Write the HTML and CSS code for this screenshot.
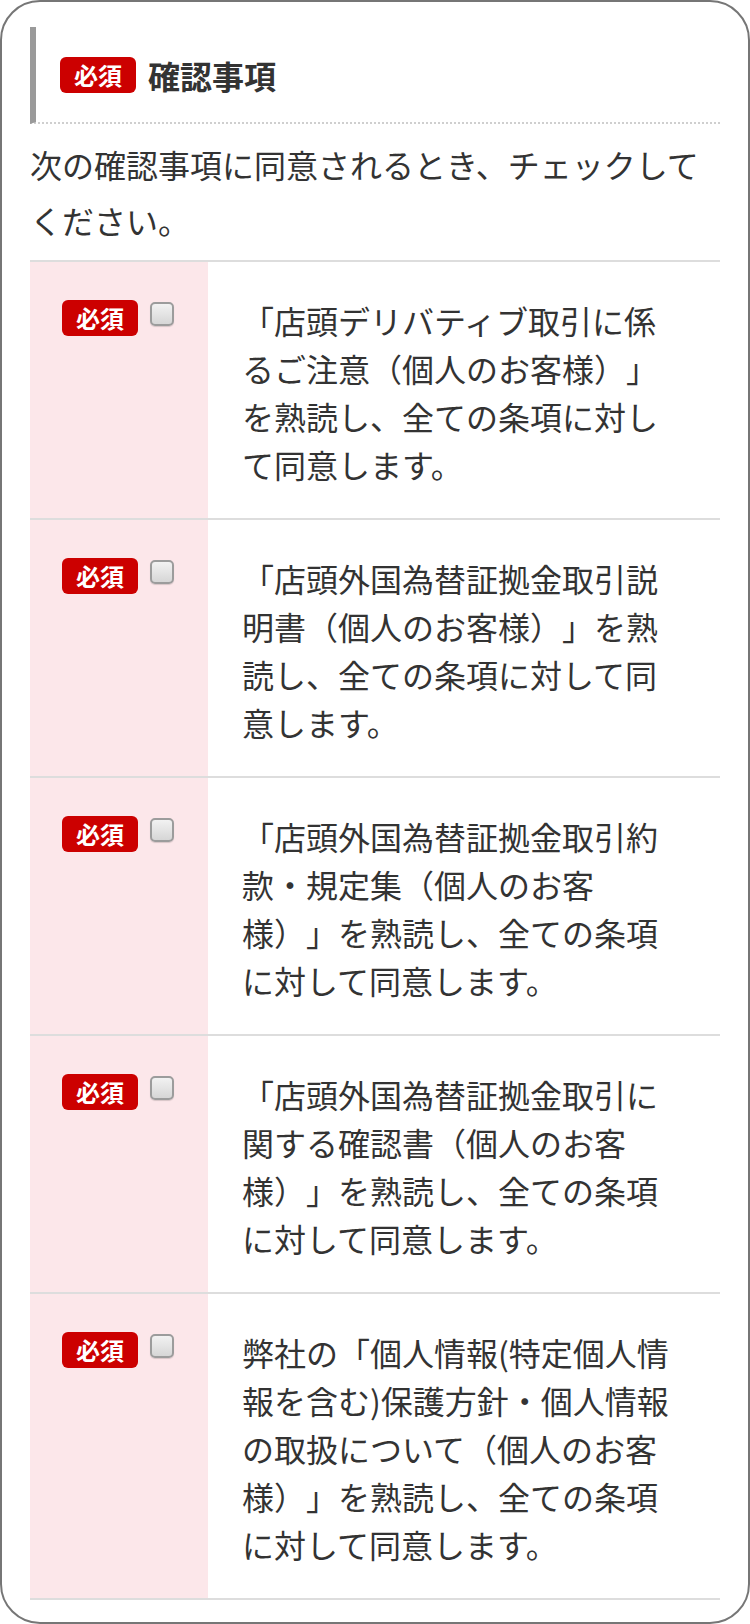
FILE: index.html
```html
<!DOCTYPE html>
<html lang="ja">
<head>
<meta charset="utf-8">
<title>確認事項</title>
<link rel="stylesheet" href="styles.css">
</head>
<body>
<div class="card">
  <div class="heading">
    <span class="badge">必須</span>
    <span class="heading-text">確認事項</span>
  </div>
  <p class="intro">次の確認事項に同意されるとき、チェックしてください。</p>
  <div class="table">
    <div class="row">
      <div class="head"><span class="badge">必須</span><input type="checkbox" class="check"></div>
      <div class="body">「店頭デリバティブ取引に係るご注意（個人のお客様）」を熟読し、全ての条項に対して同意します。</div>
    </div>
    <div class="row">
      <div class="head"><span class="badge">必須</span><input type="checkbox" class="check"></div>
      <div class="body">「店頭外国為替証拠金取引説明書（個人のお客様）」を熟読し、全ての条項に対して同意します。</div>
    </div>
    <div class="row">
      <div class="head"><span class="badge">必須</span><input type="checkbox" class="check"></div>
      <div class="body">「店頭外国為替証拠金取引約款・規定集（個人のお客様）」を熟読し、全ての条項に対して同意します。</div>
    </div>
    <div class="row">
      <div class="head"><span class="badge">必須</span><input type="checkbox" class="check"></div>
      <div class="body">「店頭外国為替証拠金取引に関する確認書（個人のお客様）」を熟読し、全ての条項に対して同意します。</div>
    </div>
    <div class="row">
      <div class="head"><span class="badge">必須</span><input type="checkbox" class="check"></div>
      <div class="body">弊社の「個人情報(特定個人情報を含む)保護方針・個人情報の取扱について（個人のお客様）」を熟読し、全ての条項に対して同意します。</div>
    </div>
  </div>
</div>
</body>
</html>
```
FILE: styles.css
```css
html, body {
  margin: 0;
  padding: 0;
  background: #ffffff;
}
body {
  font-family: "Noto Sans CJK JP", "Noto Sans", sans-serif;
  color: #333333;
  text-spacing-trim: space-all;
  font-feature-settings: "palt" 0, "halt" 0, "chws" 0;
}
.card {
  box-sizing: border-box;
  width: 750px;
  min-height: 1624px;
  border: 2px solid #767676;
  border-radius: 40px;
  padding: 25px 28px 22px 28px;
  background: #ffffff;
}
.heading {
  display: flex;
  align-items: center;
  gap: 12px;
  border-left: 6px solid #9a9a9a;
  border-bottom: 2px dotted #cfcfcf;
  padding: 24px 0 23px 24px;
  line-height: 48px;
}
.heading-text {
  font-size: 32px;
  font-weight: bold;
  color: #333333;
}
.badge {
  display: inline-flex;
  align-items: center;
  justify-content: center;
  width: 76px;
  height: 36px;
  flex: none;
  background: #cc0000;
  color: #ffffff;
  border-radius: 6px;
  font-size: 24px;
  font-weight: bold;
  line-height: 1;
}
.intro {
  margin: 12px 0 12px 0;
  font-size: 32px;
  line-height: 56px;
  color: #333333;
}
.table {
  border-top: 2px solid #dddddd;
}
.row {
  display: grid;
  grid-template-columns: 178px 1fr;
  border-bottom: 2px solid #dddddd;
}
.head {
  background: #fce7ea;
  display: flex;
  align-items: flex-start;
  gap: 12px;
  padding: 38px 0 0 32px;
}
.check {
  appearance: none;
  -webkit-appearance: none;
  margin: 2px 0 0 0;
  width: 24px;
  height: 24px;
  box-sizing: border-box;
  border: 2px solid #9c9c9c;
  border-radius: 5px;
  background: linear-gradient(#f2f2f2, #d6d6d6);
  box-shadow: 0 1px 1px rgba(0, 0, 0, 0.15);
}
.body {
  padding: 34px 34px 30px 34px;
  font-size: 32px;
  line-height: 48px;
  color: #333333;
}
```
